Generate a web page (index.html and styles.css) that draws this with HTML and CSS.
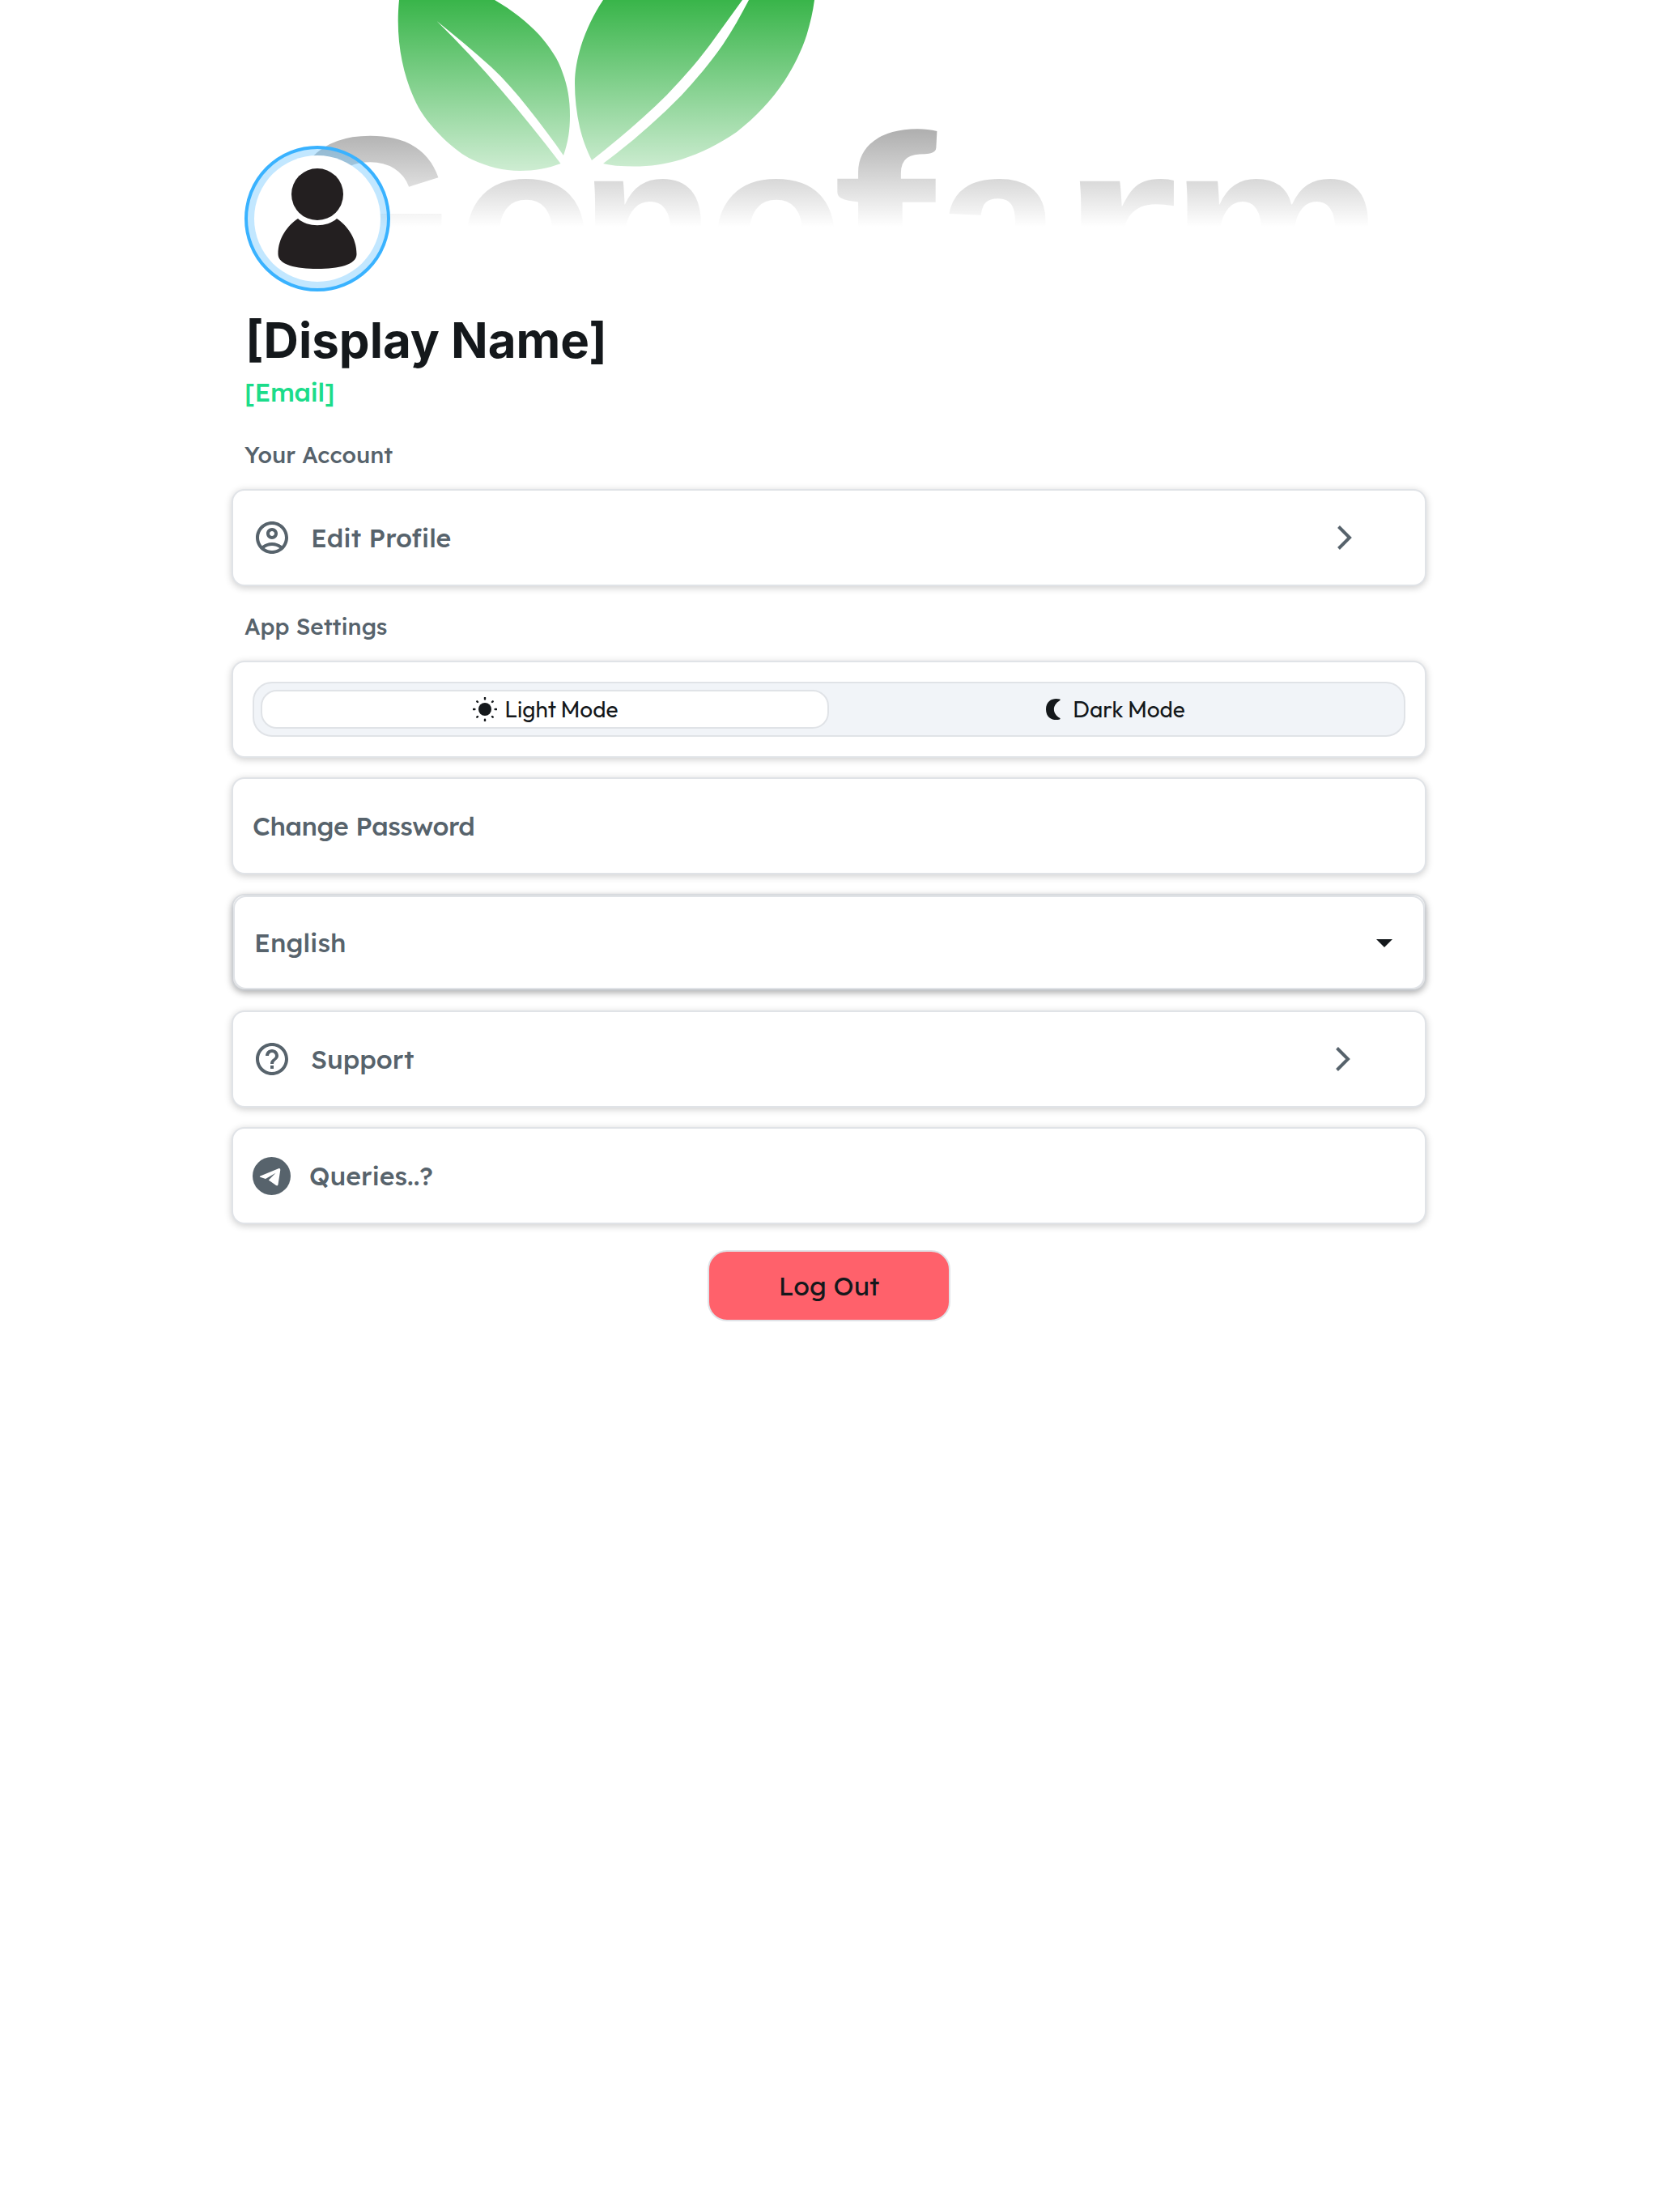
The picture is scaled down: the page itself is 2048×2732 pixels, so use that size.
FILE: index.html
```html
<!DOCTYPE html>
<html lang="en">
<head>
<meta charset="utf-8">
<title>Profile</title>
<link rel="stylesheet" href="styles.css">
</head>
<body>
<main class="page">
  <svg class="cover" viewBox="0 0 2048 280" aria-hidden="true">
    <defs>
      <linearGradient id="fade" x1="0" y1="0" x2="0" y2="1">
        <stop offset="0" stop-color="#fff" stop-opacity="0"/>
        <stop offset="1" stop-color="#fff"/>
      </linearGradient>
    </defs>
    <g fill="#39b54a">
      <path d="M493 0C488 50 498 94 514 127C528 156 563 188 583 197C603 206 622 211 642 211C660 211 677 208 692.500 202C668 170 644 140 618 110C594 82 568 54 539.500 26C562 44 585 63 607 83C623 98 638 115 652 133C668 153 683 173 696 192C702 175 704 160 704 143C704 123 701 106 695 90C690 73 678 57 666 43C651 27 632 12 611 0Z"/>
      <path d="M745 0C733 18 724 37 717.600 57C713 72 710 88 710 103C710 121 712 139 716 157C719.500 172 725 186 731 198C764 172 796 145 824 117C846 94 866 71 883 47L917 0Z"/>
      <path d="M925 0C915 19 905 37 893 55C877 78 860 98 841.500 118C811 149 779 177 745 202C757 205 770 205.500 783 205.500C803 205.500 822 203 841.500 197C866 189 888 178 910 163C933 145 953 124 969 100C981 81 990 63 996.500 43C1001 28 1004 15 1006 0Z"/>
    </g>
    <g class="wordmark"><text transform="translate(350 368) scale(1 1.050)">G</text><text x="566 716 875" y="368">ono</text><text class="wordmark-f" transform="translate(1028 362) scale(1.290 1)">f</text><text x="1158" y="368">a</text><text transform="translate(1309 368) scale(1.380 1)">r</text><text transform="translate(1446 368) scale(1.080 1)">m</text></g>
    <rect width="2048" height="280" fill="url(#fade)"/>
  </svg>

  <section class="intro">
    <div class="avatar">
      <svg viewBox="0 0 156 156">
        <circle cx="78" cy="78" r="78" fill="#fff"/>
        <circle cx="78" cy="48" r="32" fill="#231f20"/>
        <path d="M54 78C42 86 29.500 101 29.500 122C29.500 135 52 140 78 140S126.500 135 126.500 122C126.500 101 114 86 102 78C90 89 66 89 54 78Z" fill="#231f20"/>
      </svg>
    </div>
    <h1 class="name">[Display Name]</h1>
    <p class="email">[Email]</p>
  </section>

  <h2 class="label">Your Account</h2>
  <a class="card">
    <svg class="icon" viewBox="0 0 24 24"><path d="M12 2C6.480 2 2 6.480 2 12s4.480 10 10 10 10-4.480 10-10S17.520 2 12 2zM7.350 18.500C8.660 17.560 10.260 17 12 17s3.340.560 4.650 1.500C15.340 19.440 13.740 20 12 20s-3.340-.560-4.650-1.500zm10.790-1.380C16.450 15.800 14.320 15 12 15s-4.450.800-6.140 2.120C4.700 15.730 4 13.950 4 12c0-4.420 3.580-8 8-8s8 3.580 8 8c0 1.950-.700 3.730-1.860 5.120zM12 6c-1.930 0-3.500 1.570-3.500 3.500S10.070 13 12 13s3.500-1.570 3.500-3.500S13.930 6 12 6zm0 5c-.830 0-1.500-.670-1.500-1.500S11.170 8 12 8s1.500.670 1.500 1.500S12.830 11 12 11z"/></svg>
    <span class="text">Edit Profile</span>
    <svg class="chevron" viewBox="0 0 18 30"><path d="M1.500 1.500L15 15L1.500 28.500"/></svg>
  </a>

  <h2 class="label label-app">App Settings</h2>
  <div class="card card-toggle">
    <div class="toggle">
      <button class="mode mode-on">
        <svg class="sun" viewBox="0 0 30 30"><circle cx="15" cy="15" r="8"/><path d="M15 .800v1.600M15 27.600v1.600M.800 15h1.600M27.600 15h1.600M5.300 5.300l.700.700M24 24l.700.700M24.700 5.300l-.700.700M6 24l-.700.700"/></svg>
        <span>Light Mode</span>
      </button>
      <button class="mode">
        <svg class="moon" viewBox="0 0 18 28"><path d="M17 1.600C11 -.500 0 1.500 0 14S11 28.500 17 26.400Q18.400 25.800 17 24.800C7.500 19 7.500 9 17 3.200Q18.400 2.200 17 1.600Z"/></svg>
        <span>Dark Mode</span>
      </button>
    </div>
  </div>
  <a class="card"><span class="text text-tight">Change Password</span></a>
  <div class="card card-select">
    <div class="select">
      <span class="text">English</span>
      <svg class="caret" viewBox="0 0 20 10"><path d="M0 0h20L10 10z"/></svg>
    </div>
  </div>
  <a class="card">
    <svg class="icon" viewBox="0 0 24 24"><path d="M11 18h2v-2h-2v2zm1-16C6.480 2 2 6.480 2 12s4.480 10 10 10 10-4.480 10-10S17.520 2 12 2zm0 18c-4.410 0-8-3.590-8-8s3.590-8 8-8 8 3.590 8 8-3.590 8-8 8zm0-14c-2.210 0-4 1.790-4 4h2c0-1.100.900-2 2-2s2 .900 2 2c0 2-3 1.750-3 5h2c0-2.250 3-2.500 3-5 0-2.210-1.790-4-4-4z"/></svg>
    <span class="text">Support</span>
    <svg class="chevron chevron-support" viewBox="0 0 18 30"><path d="M1.500 1.500L15 15L1.500 28.500"/></svg>
  </a>
  <a class="card">
    <svg class="telegram" viewBox="0 0 47 47"><circle cx="23.500" cy="23.500" r="23.500"/><path fill="#fff" d="M9.500 23.400L32 14.200Q34.500 13.500 34.300 16L31.500 34Q31 36.300 29 35L19.800 28.600L28.500 19.800L16 27L10 25Q7.800 24.200 9.500 23.400Z"/></svg>
    <span class="text">Queries..?</span>
  </a>
  <button class="logout">Log Out</button>
</main>
</body>
</html>
```
FILE: styles.css
```css
* { box-sizing: border-box; }

body {
  margin: 0;
  background: #fff;
  font-family: Lexend, Inter, sans-serif;
  color: #14181b;
}

.page {
  position: relative;
  display: flex;
  flex-direction: column;
  width: 2048px;
  min-height: 2732px;
  padding: 180px 286px 0;
}

.cover {
  position: absolute;
  top: 0;
  left: 0;
  width: 2048px;
  height: 280px;
}

.wordmark {
  font-family: "Liberation Sans", sans-serif;
  font-weight: 700;
  font-size: 273px;
  fill: #444;
}

.wordmark-f { font-family: Lato, sans-serif; font-weight: 800; }

.intro {
  position: relative;
  display: flex;
  flex-direction: column;
  align-items: flex-start;
  padding-left: 16px;
}

.avatar {
  width: 180px;
  height: 180px;
  padding: 8px;
  border: 4px solid #39b2ff;
  border-radius: 50%;
  background: rgba(57, 178, 255, .31);
}

.avatar svg { display: block; width: 156px; height: 156px; }

.name {
  margin: 22px 0 0 1px;
  font-family: Inter, sans-serif;
  font-size: 60px;
  font-weight: 700;
  line-height: 76px;
  white-space: nowrap;
}

.email {
  margin: 6px 0 0;
  font-size: 32px;
  font-weight: 500;
  line-height: 40px;
  letter-spacing: -.5px;
  color: #1bdc8a;
}

.label {
  margin: 38px 0 0 16px;
  font-size: 28px;
  font-weight: 500;
  line-height: 40px;
  color: #57636c;
}

.label-app { margin-top: 30px; }

.card {
  display: flex;
  align-items: center;
  height: 120px;
  margin-bottom: 24px;
  padding: 0 24px;
  border: 2px solid #e0e3e7;
  border-radius: 16px;
  background: #fff;
  box-shadow: 0 2px 10px rgba(0, 0, 0, .2);
  color: #57636c;
}

.label + .card { margin-top: 22px; }
.label + .card:not(.card-toggle) { margin-bottom: 0; }

.text {
  font-size: 32px;
  font-weight: 500;
  line-height: 40px;
  white-space: nowrap;
}

.text-tight { letter-spacing: -.46px; }

.icon { width: 48px; height: 48px; fill: #57636c; margin-right: 24px; }

.chevron {
  width: 18px;
  height: 30px;
  margin: 0 66px 0 auto;
  fill: none;
  stroke: #57636c;
  stroke-width: 4;
}

.chevron-support { margin-right: 68px; }

.toggle {
  display: grid;
  grid-template-columns: 702px 702px;
  width: 100%;
  height: 68px;
  padding: 8px;
  border: 2px solid #e0e3e7;
  border-radius: 24px;
  background: #f1f4f8;
}

.mode {
  display: flex;
  align-items: center;
  justify-content: center;
  padding: 0;
  border: 2px solid transparent;
  border-radius: 20px;
  background: none;
  font: 400 28px/36px Outfit, Inter, sans-serif;
  color: #14181b;
}

.mode-on { border-color: #e0e3e7; background: #fff; }

.sun { width: 30px; height: 30px; margin: 0 10px 0 1px; fill: #14181b; stroke: #14181b; stroke-width: 2.400; stroke-linecap: round; }
.sun circle { stroke: none; }
.moon { width: 18px; height: 28px; margin: 0 15px 0 6px; fill: #14181b; }

.card-select { padding: 0; }

.select {
  display: flex;
  align-items: center;
  justify-content: space-between;
  width: 100%;
  height: 116px;
  padding: 0 38px 0 24px;
  border: 2px solid #e0e3e7;
  border-radius: 16px;
  background: #fff;
  box-shadow: 0 3px 8px rgba(0, 0, 0, .2);
}

.caret { width: 20px; height: 10px; margin-top: 2px; fill: #14181b; }

.telegram { width: 47px; height: 47px; margin-right: 23px; fill: #57636c; }

.logout {
  align-self: center;
  width: 300px;
  height: 88px;
  margin-top: 8px;
  padding: 0;
  border: 2px solid #e0e3e7;
  border-radius: 24px;
  background: #ff616b;
  font: 400 32px/40px Lexend, Inter, sans-serif;
  color: #14181b;
}
```
